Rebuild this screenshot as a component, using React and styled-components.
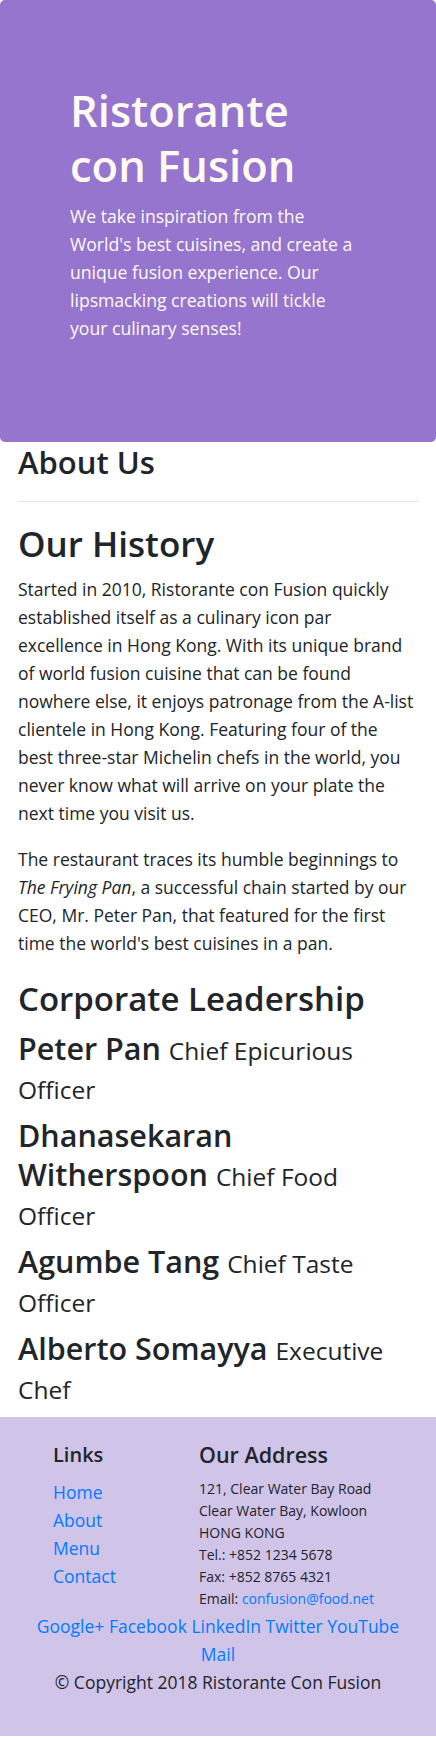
import React from 'react';
import styled, { createGlobalStyle } from 'styled-components';

const GlobalStyle = createGlobalStyle`
  * {
    box-sizing: border-box;
  }

  body {
    margin: 0;
    background: #fff;
    color: #212529;
    font-family: 'Open Sans', 'Noto Sans', sans-serif;
  }
`;

const Jumbotron = styled.header`
  background-color: #9575cd;
  border-radius: 5px;
  color: floralwhite;
  padding: 83px 74px 100px 70px;
`;

const Title = styled.h1`
  font-size: 43.5px;
  font-weight: 600;
  line-height: 55px;
  margin: 0 0 9px;
`;

const Lead = styled.p`
  font-size: 17.6px;
  line-height: 28px;
  margin: 0;
`;

const Container = styled.main`
  padding: 0 17px 0 18px;
`;

const Heading = styled.h2`
  font-size: ${props => props.size}px;
  font-weight: 600;
  line-height: ${props => props.lh}px;
  margin: ${props => props.mt || 0}px 0 ${props => props.mb || 0}px;
`;

const Rule = styled.hr`
  border: 0;
  border-top: 1px solid rgba(0, 0, 0, 0.1);
  margin: 19px 0 20px;
`;

const Text = styled.p`
  font-size: 17.5px;
  line-height: 28px;
  margin: 0 0 18px;
`;

const Leader = styled.h4`
  font-size: 30.5px;
  font-weight: 600;
  line-height: 39px;
  margin: 0 0 9px;

  small {
    font-size: 24.5px;
    font-weight: 400;
    line-height: 1;
  }
`;

const Footer = styled.footer`
  background-color: #d1c4e9;
  padding: 25px 17px 40px;
  margin-top: 10px;
`;

const Row = styled.div`
  display: grid;
  grid-template-columns: 36px 146px 1fr;
  margin: 0 -17px;
`;

const Col = styled.div`
  grid-column: ${props => props.col};
  padding: 0 17px;
`;

const FooterTitle = styled.h5`
  font-size: ${props => props.size || 20}px;
  font-weight: 600;
  line-height: 25px;
  margin: 0 0 11px;
`;

const LinkList = styled.ul`
  list-style: none;
  margin: 0;
  padding: 0;
  font-size: 17.5px;
  line-height: 28px;
`;

const A = styled.a`
  color: #007bff;
  text-decoration: none;
`;

const Address = styled.address`
  font-style: normal;
  font-size: 14px;
  line-height: 22px;
  margin: 0 0 2px;
`;

const Centered = styled.div`
  max-width: ${props => props.max || 'none'};
  margin: 0 auto;
  text-align: center;
  font-size: 17.5px;
  line-height: 28px;
`;

const leaders = [
  { name: 'Peter Pan', role: 'Chief Epicurious Officer' },
  { name: 'Dhanasekaran Witherspoon', role: 'Chief Food Officer' },
  { name: 'Agumbe Tang', role: 'Chief Taste Officer' },
  { name: 'Alberto Somayya', role: 'Executive Chef' },
];

const links = ['Home', 'About', 'Menu', 'Contact'];
const socials = ['Google+', 'Facebook', 'LinkedIn', 'Twitter', 'YouTube', 'Mail'];

const App = () => (
  <>
    <GlobalStyle />
    <Jumbotron>
      <Title>Ristorante con Fusion</Title>
      <Lead>
        We take inspiration from the World's best cuisines, and create a
        unique fusion experience. Our lipsmacking creations will tickle your
        culinary senses!
      </Lead>
    </Jumbotron>
    <Container>
      <Heading size={31} lh={40}>About Us</Heading>
      <Rule />
      <Heading size={35} lh={44} mb={9}>Our History</Heading>
      <Text>
        Started in 2010, Ristorante con Fusion quickly established itself as a
        culinary icon par excellence in Hong Kong. With its unique brand of
        world fusion cuisine that can be found nowhere else, it enjoys
        patronage from the A-list clientele in Hong Kong. Featuring four of
        the<br />
        best three-star Michelin chefs in the world, you never know what will
        arrive on your plate the next time you visit us.
      </Text>
      <Text>
        The restaurant traces its humble beginnings to <em>The Frying Pan</em>,
        a successful chain started by our CEO, Mr. Peter Pan, that featured for
        the first time the world's best cuisines in a pan.
      </Text>
      <Heading as="h3" size={33} lh={38} mt={23} mb={11}>
        Corporate Leadership
      </Heading>
      {leaders.map(l => (
        <Leader key={l.name}>
          {l.name} <small>{l.role}</small>
        </Leader>
      ))}
    </Container>
    <Footer>
      <Row>
        <Col col="2">
          <FooterTitle>Links</FooterTitle>
          <LinkList>
            {links.map(l => (
              <li key={l}>
                <A href="#">{l}</A>
              </li>
            ))}
          </LinkList>
        </Col>
        <Col col="3">
          <FooterTitle size={21.5}>Our Address</FooterTitle>
          <Address>
            121, Clear Water Bay Road<br />
            Clear Water Bay, Kowloon<br />
            HONG KONG<br />
            Tel.: +852 1234 5678<br />
            Fax: +852 8765 4321<br />
            Email: <A href="#">confusion@food.net</A>
          </Address>
        </Col>
      </Row>
      <Centered max="385px">
        {socials.map((s, i) => (
          <React.Fragment key={s}>
            <A href="#">{s}</A>
            {i < socials.length - 1 ? ' ' : ''}
          </React.Fragment>
        ))}
      </Centered>
      <Centered>© Copyright 2018 Ristorante Con Fusion</Centered>
    </Footer>
  </>
);

export default App;
